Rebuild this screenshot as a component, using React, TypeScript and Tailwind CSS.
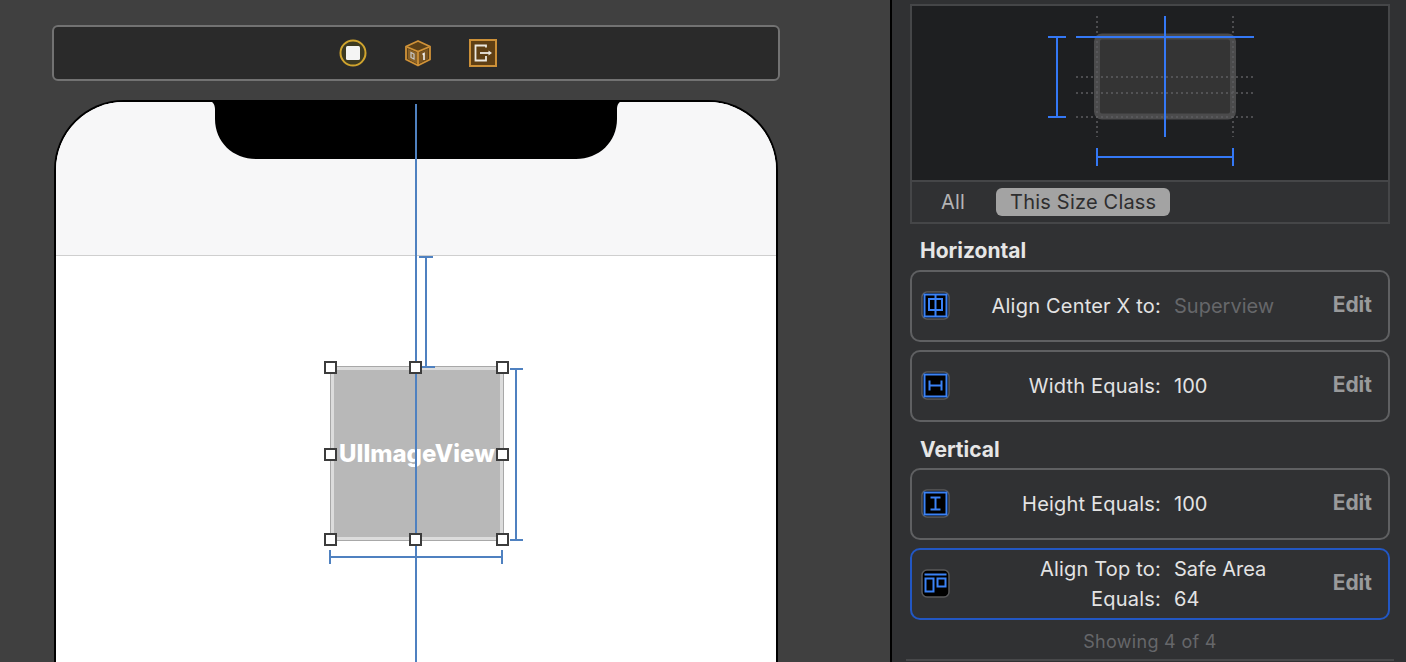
import React from "react";

const font = { fontFamily: "Inter, 'Liberation Sans', sans-serif" };

function StopIcon() {
  return (
    <svg width="28" height="28" viewBox="0 0 28 28">
      <circle cx="14" cy="14" r="12.5" fill="#3d3a22" stroke="#d0a42e" strokeWidth="2" />
      <rect x="7" y="7" width="14" height="14" rx="1.5" fill="#f4f4f4" />
    </svg>
  );
}

function CubeIcon() {
  return (
    <svg width="28" height="28" viewBox="0 0 28 28">
      <path d="M14 2 L26 7.5 V20.5 L14 26.5 L2 20.5 V7.5 Z" fill="#5b4018" stroke="#d09238" strokeWidth="1.8" strokeLinejoin="round" />
      <path d="M3 8 L14 12.5 L25 8 M14 12.5 V26" fill="none" stroke="#d09238" strokeWidth="1.8" />
      <path d="M4 10 L13 13.5 V24.5 L4 20 Z" fill="#8a6228" />
      <path d="M15 13.5 L24 10 V20 L15 24.5 Z" fill="#7a5420" />
      <path d="M7 13.5 L10 15 V20 L7 18.5 Z" fill="none" stroke="#c8c8c8" strokeWidth="1.2" />
      <path d="M18.5 15.5 L20 14.7 V21" fill="none" stroke="#f0f0f0" strokeWidth="1.6" />
    </svg>
  );
}

function ExitIcon() {
  return (
    <svg width="28" height="28" viewBox="0 0 28 28">
      <rect x="1" y="1" width="26" height="26" fill="#5f3f14" stroke="#cc9038" strokeWidth="2" />
      <path d="M17 8.5 V6.5 H6.5 V21.5 H17 V17" fill="none" stroke="#ece8e0" strokeWidth="1.8" />
      <path d="M11 14 H21" stroke="#ece8e0" strokeWidth="1.8" />
      <path d="M19.5 11.5 L23 14 L19.5 16.5 Z" fill="#ece8e0" />
    </svg>
  );
}

function ConstraintIcon({ children }: { children: React.ReactNode }) {
  return (
    <svg width="29" height="29" viewBox="0 0 29 29" className="mb-[2px] shrink-0">
      <rect x="1" y="1" width="27" height="27" rx="5" fill="#000" stroke="#59595b" strokeWidth="1.5" />
      <g fill="none" stroke="#3b82f6" strokeWidth="2">{children}</g>
    </svg>
  );
}

function Handle({ pos }: { pos: string }) {
  return <div className={`absolute h-[13px] w-[13px] border-2 border-[#3c3c3c] bg-white ${pos}`} />;
}

function Card({
  icon,
  rows,
  active,
}: {
  icon: React.ReactNode;
  rows: { label: string; value: string; dim?: boolean }[];
  active?: boolean;
}) {
  return (
    <div
      className={`flex h-[72px] items-center rounded-[10px] border-2 pl-[9px] ${active ? "border-[#2257c4]" : "border-[#5f6062]"}`}
    >
      {icon}
      <div className="flex flex-1 flex-col gap-[6px]">
        {rows.map((r) => (
          <div key={r.label} className="flex h-[24px] items-center text-[20px] leading-[24px]">
            <div className="w-[211px] shrink-0 text-right tracking-[0.2px] text-[#e3e3e3]">{r.label}</div>
            <div className={`ml-[13px] ${r.dim ? "text-[#66676a]" : "text-[#e3e3e3]"}`}>{r.value}</div>
          </div>
        ))}
      </div>
      <div className="mb-[2px] mr-[16px] text-[21px] font-bold leading-[24px] text-[#999a9b]">Edit</div>
    </div>
  );
}

export default function App() {
  return (
    <div className="flex h-[662px] w-[1406px] overflow-hidden bg-[#404040]" style={font}>
      {/* Canvas */}
      <div className="w-[890px] shrink-0 pl-[52px] pt-[25px]">
        <div className="flex h-[56px] w-[728px] items-center justify-center gap-[37px] rounded-[6px] border-2 border-[#727272] bg-[#2a2a2a] pl-[3px]">
          <StopIcon />
          <CubeIcon />
          <ExitIcon />
        </div>

        <div className="relative ml-[2px] mt-[19px] h-[562px] w-[724px]">
          <div className="h-full overflow-hidden rounded-t-[70px] border-x-2 border-t-2 border-black bg-white">
            <div className="h-[154px] border-b border-[#cfcfcf] bg-[#f7f7f8]" />
          </div>

          {/* Notch */}
          <svg className="absolute left-[152px] top-0" width="420" height="60" viewBox="0 0 420 60">
            <path
              d="M0 0 H420 C415 0 411 3 411 9 V19 C411 42 393 59 370 59 H50 C27 59 9 42 9 19 V9 C9 3 5 0 0 0 Z"
              fill="#000"
            />
          </svg>

          {/* Image view */}
          <div className="absolute left-[277px] top-[267px] flex h-[173px] w-[172px] items-center justify-center border-[3px] border-[#dcdcdc] bg-[#b8b8b8] outline outline-1 outline-[#a8a8a8]">
            <span className="whitespace-nowrap text-[24px] font-extrabold leading-none text-white">UIImageView</span>
          </div>

          {/* Constraint lines */}
          <svg className="absolute left-0 top-0" width="724" height="562" viewBox="54 100 724 562">
            <g fill="none" stroke="#4f81c0" strokeWidth="2">
              <path d="M416 104 V662" />
              <path d="M426 257 V367 M419 257 H433 M416 367 H435" />
              <path d="M516 369 V540 M510 369 H523 M510 540 H523" />
              <path d="M330 557 H502 M330 550 V564 M502 550 V564" />
            </g>
          </svg>

          {/* Handles */}
          <Handle pos="left-[270px] top-[261px]" />
          <Handle pos="left-[355px] top-[261px]" />
          <Handle pos="left-[442px] top-[261px]" />
          <Handle pos="left-[270px] top-[348px]" />
          <Handle pos="left-[442px] top-[348px]" />
          <Handle pos="left-[270px] top-[433px]" />
          <Handle pos="left-[355px] top-[433px]" />
          <Handle pos="left-[442px] top-[433px]" />
        </div>
      </div>

      <div className="w-[2px] shrink-0 bg-black" />

      {/* Inspector */}
      <div className="flex-1 bg-[#303133] pt-[4px]">
        <div className="ml-[18px] w-[480px]">
          <div className="border-2 border-[#454648]">
            <div className="h-[174px] bg-[#1e1f21]">
              <svg width="476" height="174" viewBox="912 6 476 174">
                <rect x="1097" y="36.5" width="136" height="80" rx="5" fill="#343434" stroke="#4b4b4c" strokeWidth="6" />
                <g stroke="#5e5e60" strokeWidth="1.5" strokeDasharray="2 3" fill="none">
                  <path d="M1097 16 V137 M1233 16 V137" />
                  <path d="M1076 77 H1254 M1076 93 H1254 M1076 117 H1254" />
                </g>
                <g stroke="#3478f6" strokeWidth="2" fill="none">
                  <path d="M1076 37 H1254" />
                  <path d="M1165 16 V137" />
                  <path d="M1057 37 V117 M1048 37 H1066 M1048 117 H1066" />
                  <path d="M1097 157 H1233 M1097 148 V166 M1233 148 V166" />
                </g>
              </svg>
            </div>
            <div className="flex h-[42px] items-center border-t-2 border-[#454648] pl-[29px] text-[20px] tracking-[0.2px]">
              <span className="text-[#b4b4b5]">All</span>
              <span className="ml-[31px] flex h-[28px] items-center rounded-[6px] bg-[#a3a3a3] px-[14px] text-[#2e2e2f]">
                This Size Class
              </span>
            </div>
          </div>

          <div className="ml-[10px] mt-[14px] text-[21px] font-bold leading-[26px] text-[#e6e6e6]">Horizontal</div>
          <div className="mt-[6px] flex flex-col gap-[8px]">
            <Card
              icon={
                <ConstraintIcon>
                  <rect x="3.5" y="3.5" width="22" height="22" />
                  <rect x="8" y="8" width="13" height="11" />
                  <path d="M14.5 3.5 V25.5" />
                </ConstraintIcon>
              }
              rows={[{ label: "Align Center X to:", value: "Superview", dim: true }]}
            />
            <Card
              icon={
                <ConstraintIcon>
                  <rect x="3.5" y="3.5" width="22" height="22" />
                  <path d="M8.5 9.5 V19.5 M20.5 9.5 V19.5 M8.5 14.5 H20.5" />
                </ConstraintIcon>
              }
              rows={[{ label: "Width Equals:", value: "100" }]}
            />
          </div>

          <div className="ml-[10px] mt-[15px] text-[21px] font-bold leading-[26px] text-[#e6e6e6]">Vertical</div>
          <div className="mt-[5px] flex flex-col gap-[8px]">
            <Card
              icon={
                <ConstraintIcon>
                  <rect x="3.5" y="3.5" width="22" height="22" />
                  <path d="M9.5 8.5 H19.5 M9.5 20.5 H19.5 M14.5 8.5 V20.5" />
                </ConstraintIcon>
              }
              rows={[{ label: "Height Equals:", value: "100" }]}
            />
            <Card
              active
              icon={
                <ConstraintIcon>
                  <path d="M3.5 5.5 H25.5" />
                  <rect x="4.5" y="9.5" width="8" height="13" />
                  <rect x="16.5" y="9.5" width="8" height="8" />
                </ConstraintIcon>
              }
              rows={[
                { label: "Align Top to:", value: "Safe Area" },
                { label: "Equals:", value: "64" },
              ]}
            />
          </div>

          <div className="mt-[10px] text-center text-[18px] leading-[24px] tracking-[0.3px] text-[#66676a]">
            Showing 4 of 4
          </div>
        </div>
        <div className="ml-[14px] mt-[5px] h-[2px] w-[488px] bg-[#47484a]" />
      </div>
    </div>
  );
}
